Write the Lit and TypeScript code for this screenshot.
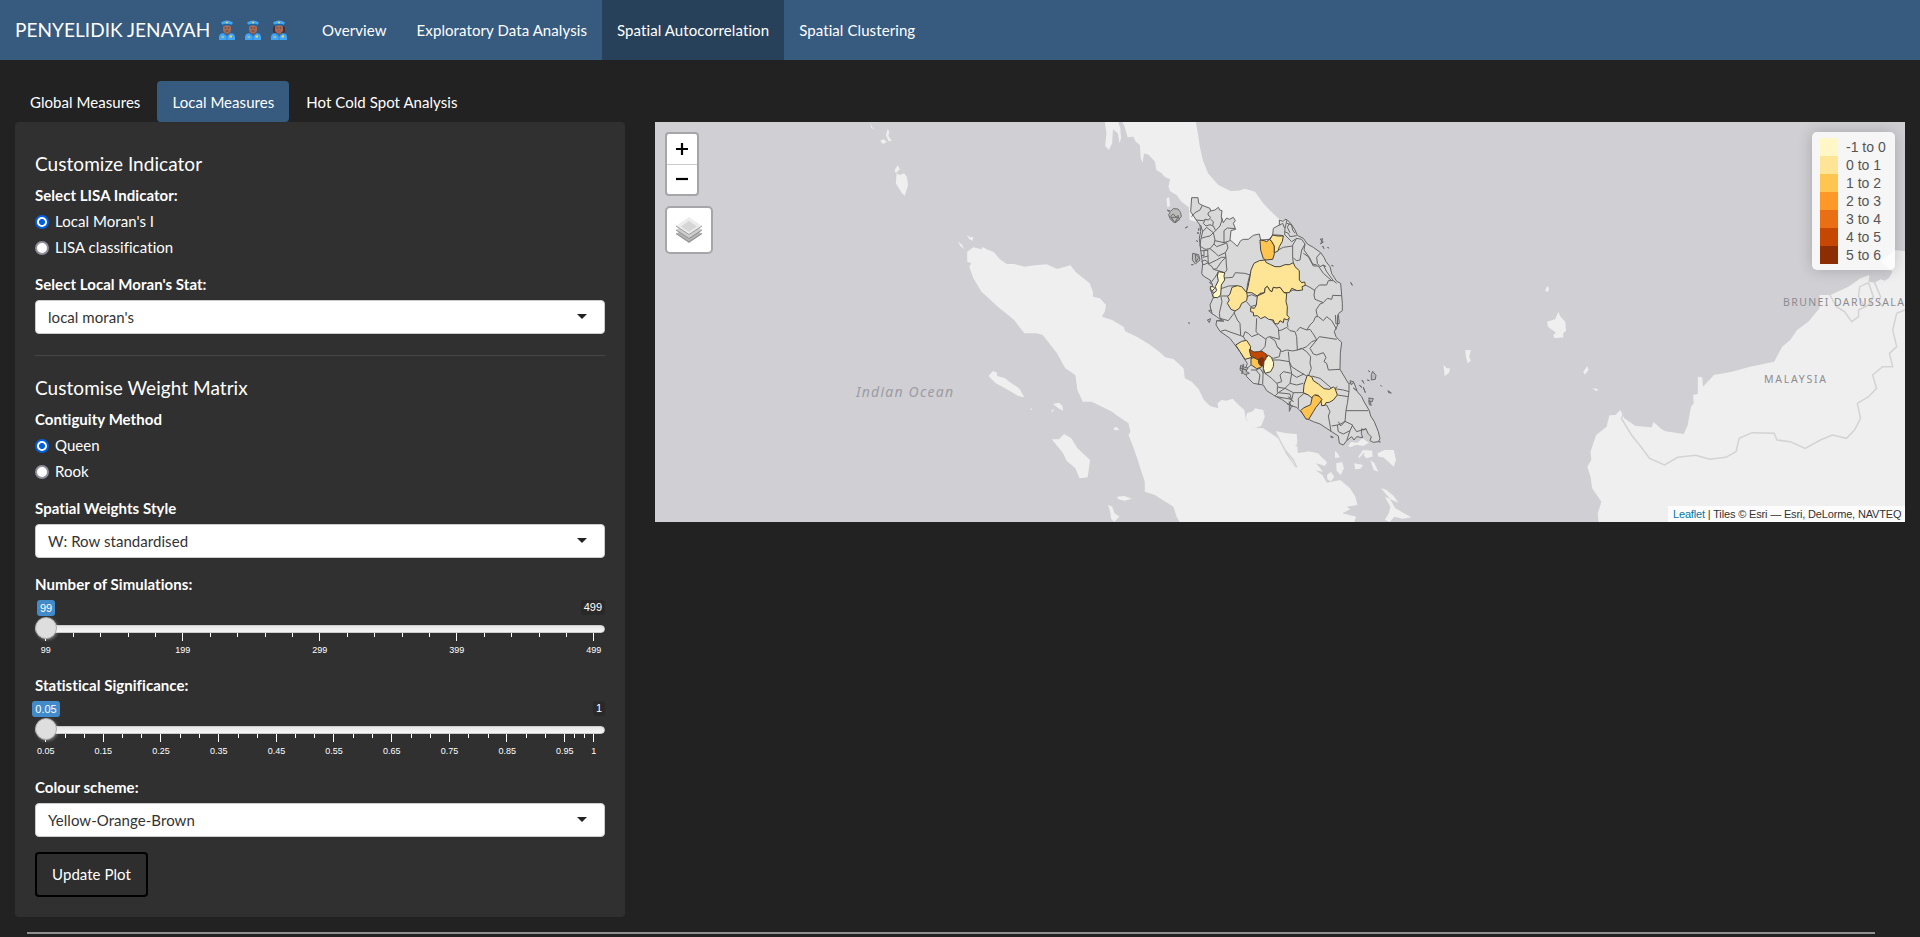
import { LitElement, html, svg, css } from "lit";
import { customElement, property } from "lit/decorators.js";

const OUTLINE = "125,83 144,83 146,100 157,106 180,115 182,123 195,120 205,112 209,120 216,122 214,140 220,158 230,144 238,148 250,142 256,152 250,160 257,178 243,182 240,210 250,218 262,229 272,212 280,208 295,208 310,196 328,192 332,210 358,208 368,195 370,175 388,165 388,150 400,154 405,148 411,149 422,160 435,180 442,196 460,205 472,222 490,232 512,248 522,262 528,275 540,290 545,310 560,334 572,340 575,376 577,400 577,422 566,430 562,440 563,465 553,485 558,500 565,508 575,517 571,550 570,598 582,618 595,640 612,638 622,665 635,680 642,695 658,722 662,738 673,755 685,785 690,806 685,815 670,817 660,812 664,800 655,792 648,776 641,780 635,776 634,790 638,803 620,800 612,810 605,800 590,812 580,825 568,820 565,798 545,785 525,772 510,762 490,755 475,748 450,722 440,712 420,706 395,688 375,678 350,662 340,645 310,640 290,620 285,600 292,580 285,570 270,545 255,525 240,505 210,484 198,465 200,452 215,452 200,440 185,430 180,405 190,382 182,360 188,345 180,330 160,318 155,310 158,282 152,240 148,205 152,185 150,165 140,152 122,125";

const BORDERS = [
  "125,140 135,128 150,120 157,106", "138,150 160,152 166,148 176,150 182,142 174,135 175,128 182,123",
  "166,148 160,160 168,168 180,164 188,168 190,155 182,148", "152,165 158,185 170,172 190,188 197,182 190,168",
  "197,182 210,168 216,150 214,140", "158,185 153,205 170,200 180,198 190,188", "190,188 195,210 192,222 180,236 165,238 150,228 153,205",
  "195,212 222,218 222,182 232,174 255,176", "192,222 200,230 222,222 230,218 234,234 226,248 205,258 195,248 180,236",
  "222,218 240,212", "173,240 175,282 200,270 214,262 228,262 226,248", "152,242 162,242 175,240", "156,256 162,258 162,242", "158,262 175,258",
  "154,275 165,270 175,278 162,284 158,282", "175,282 186,290 190,298 200,296 215,274 228,262", "190,298 205,302 224,308", "228,262 229,285 231,300 224,308",
  "224,324 248,322 256,308 284,310 298,314", "180,330 185,335 195,322 205,306", "213,356 236,348 262,347", "290,368 292,345 300,312",
  "190,384 213,378 236,378", "213,380 216,395 208,430 210,445 235,452 252,430 255,423", "210,445 222,454 200,452",
  "252,427 262,450 270,460 272,497 240,486 225,480 212,484", "320,445 318,485 325,492", "272,497 280,500 285,485 295,490 305,500 325,492",
  "280,500 287,512", "325,492 348,508 352,502 360,500 388,508", "348,508 345,530 330,545", "388,508 385,475 365,450",
  "360,502 375,512 382,530 392,540 388,560 370,565 352,556", "386,482 395,480 410,472 420,482 435,485 440,500 442,540 428,543 410,540 395,545 382,530",
  "440,484 450,472 470,480 480,478 487,488 492,495 500,510 485,515 470,530 458,535 442,540", "418,445 412,460 414,472",
  "470,480 480,465 490,455 497,440 505,440", "412,368 430,360 445,362", "465,345 480,352 495,362", "492,375 495,358 508,345 530,345 535,332 550,332 560,340",
  "492,375 495,388 520,398 532,385 545,388 548,376 575,377", "502,438 498,420 510,402 520,398", "505,440 520,452 530,440 545,452 560,478", "500,510 508,500 560,508",
  "500,510 480,535 490,552 500,555 520,548 528,562 522,575 530,580 535,600 570,598", "442,540 455,535 470,545 482,560 480,580 484,595 475,618",
  "415,545 418,575 388,570 368,570", "418,575 425,590 440,600 470,618", "418,575 425,610 400,605 390,615 395,635 380,640 365,625 345,610",
  "425,610 420,640 405,655 385,652 380,640", "425,612 440,622 462,612", "420,640 440,645 460,640", "405,655 430,668 460,668", "405,655 385,668 375,678",
  "382,650 382,668", "303,600 318,600 330,615 325,645", "303,585 285,600", "340,590 338,642", "318,600 330,595 340,610", "385,668 420,672 424,688 380,680",
  "430,668 425,690 415,705", "485,678 462,670 445,685 445,715", "485,618 510,625 545,655 580,660 597,665 597,640", "562,650 555,655", "562,675 595,680",
  "597,665 592,700 588,722 655,722", "588,722 585,755 572,768 565,755", "515,707 530,705 540,725 535,738 540,765 543,785", "545,768 562,765 572,762 585,754 608,765 600,782 580,792 565,785 562,765",
  "600,782 590,812", "608,768 620,785 648,776", "366,195 385,195 400,197", "404,195 405,175 411,150", "388,166 398,160 404,175", "404,185 415,190 420,200 440,197",
  "411,160 425,165 428,180 435,190", "418,160 412,172 420,188", "440,205 425,215 405,195", "440,205 428,225 428,265 430,278", "385,240 400,232 428,228",
  "440,205 455,208 465,222 455,240 450,270 440,272 430,264", "465,222 462,240 478,262 488,282 500,285", "460,250 475,260 490,288 505,288 520,310 545,332",
  "512,248 500,262 502,280 510,290 520,285 528,290", "520,285 530,305 550,332", "290,380 305,374 320,380", "290,395 302,410 318,405", "556,435 558,462 568,460 565,435",
];

const DISTRICTS = [
  { c: "#fec44f", p: "330,210 342,212 350,215 358,208 366,216 373,228 373,252 368,268 348,270 340,266 332,240" },
  { c: "#fee596", p: "368,195 382,198 400,198 397,214 388,230 384,243 373,248 373,228 366,216 360,208" },
  { c: "#fee596", p: "328,272 345,270 348,277 362,284 375,290 390,290 405,284 418,284 430,278 435,290 448,302 448,330 455,338 464,336 466,346 456,350 458,360 442,362 425,355 418,368 402,368 390,352 380,354 370,352 366,365 360,362 352,349 345,355 344,368 330,370 322,378 305,368 289,368 294,350 300,320 303,300 312,280" },
  { c: "#fee596", p: "322,378 344,368 345,355 352,349 360,362 366,365 370,352 380,354 390,352 402,368 410,370 408,395 412,410 411,435 418,443 412,450 402,446 400,458 390,452 384,462 374,461 370,450 356,448 345,440 332,446 322,437 311,438 310,427 302,425 302,413 313,415 319,405" },
  { c: "#fee596", p: "246,352 262,347 275,350 290,368 292,378 290,392 275,400 268,415 255,423 243,418 232,400 238,390 233,380 240,372" },
  { c: "#fff7c5", p: "205,305 224,308 222,318 224,330 214,345 212,375 203,383 190,382 188,372 200,362 196,350 205,332 202,318" },
  { c: "#fff7c5", p: "181,350 190,350 194,355 187,362 181,358" },
  { c: "#fee596", p: "257,525 275,514 290,511 302,530 300,545 306,562 285,568 270,545" },
  { c: "#c54702", p: "298,538 312,546 325,545 335,543 352,555 346,565 349,573 330,567 325,572 310,562 302,558" },
  { c: "#fec44f", p: "303,565 312,563 325,570 328,582 338,588 330,593 320,596 303,584" },
  { c: "#8c2d04", p: "327,566 338,562 341,570 339,587 330,586 325,576" },
  { c: "#fff7c5", p: "350,562 356,556 364,562 371,578 370,590 362,605 345,610 340,595 342,575" },
  { c: "#fee596", p: "472,615 485,620 490,632 505,642 522,656 538,658 550,651 555,655 562,675 550,690 538,697 528,698 524,706 515,707 513,692 505,676 495,675 486,684 475,675 460,668 462,645" },
  { c: "#fec44f", p: "487,680 494,675 506,678 516,688 508,700 498,712 490,725 476,748 468,747 452,722 460,714 482,704" },
];

const ISLETS = [
  "52,120 62,124 70,116 84,117 92,128 94,140 86,148 78,158 70,156 60,146 56,134 60,128", "62,138 70,132 78,142 84,136 88,150 76,154 66,148", "64,142 84,142 74,158", "106,174 113,170",
  "146,175 146,182", "144,186 144,192", "139,212 144,215", "128,250 146,254 150,270 136,282 127,270", "136,252 138,276 146,262", "124,284 130,284", "178,336 186,344", "184,352 182,362 190,370",
  "176,422 186,430 184,420", "172,450 182,446 178,458", "116,457 118,461", "272,586 284,592 294,594 288,604 298,610 284,614 276,604 270,600", "280,582 276,612", "270,594 290,600",
  "510,208 520,216 512,222 518,206", "518,228 522,236", "533,231 536,235", "520,285 524,290", "545,286 550,288", "602,337 607,346", "655,602 660,606", "668,604 678,616 676,628 664,630 664,614", "652,630 658,632",
  "636,630 642,640", "628,646 636,652", "600,632 612,636 604,645", "610,654 620,662", "640,652 646,668", "692,646 695,649", "714,662 724,669 716,668", "656,684 670,686 666,696 656,692 658,704 664,706", "686,815 691,816",
  "542,798 550,802 544,803", "418,695 424,710 418,724", "412,702 428,708", "415,680 430,695",
];

const RAW_WEST = [
  "1145,6 1150,18 1158,52 1172,50 1178,65 1188,75 1190,115 1195,128 1198,100 1210,105 1225,125 1228,150 1240,158 1250,172 1262,178 1258,200 1262,214 1278,225 1290,245 1308,262 1310,300 1400,330 1400,400 1532,390 1545,330 1540,300 1528,296 1510,275 1490,250 1470,215 1445,206 1430,212 1410,213 1380,195 1355,160 1342,120 1335,80 1330,40 1325,6",
  "1102,6 1135,6 1140,25 1142,55 1138,70 1134,40 1122,28 1120,70 1112,90 1103,78 1106,40",
  "765,395 780,382 800,388 803,381 812,388 830,396 845,418 862,432 880,432 905,440 930,436 960,433 985,447 1018,436 1030,455 1045,470 1065,490 1073,515 1073,530 1090,535 1105,555 1102,575 1095,590 1120,600 1148,620 1152,634 1180,650 1210,672 1240,700 1250,712 1270,717 1295,745 1298,775 1315,785 1332,808 1345,840 1360,858 1380,865 1378,850 1388,840 1400,842 1415,836 1430,855 1444,870 1448,900 1465,922 1490,925 1515,945 1535,962 1545,1000 1568,1040 1615,1048 1635,1065 1646,1088 1679,1080 1703,1105 1716,1130 1721,1155 1695,1160 1703,1168 1684,1180 1718,1190 1713,1206 1285,1206 1278,1190 1270,1160 1225,1125 1200,1115 1200,1085 1180,1010 1170,975 1160,945 1165,935 1160,910 1130,885 1120,875 1070,845 1048,845 1035,810 1030,765 1005,745 985,700 950,645 935,640 905,640 880,600 840,560 800,515 780,475 770,440 775,430 765,425",
  "1450,880 1465,874 1470,865 1490,870 1494,890 1485,918 1468,924 1455,915 1448,895",
  "1253,235 1260,232 1262,258 1255,262", "592,160 600,165 610,160 617,170 620,195 612,227 605,220 590,190", "587,150 595,136 600,148 590,160",
  "527,8 532,22 538,28 530,24", "570,26 574,35 572,48 580,62 572,64 566,45", "552,62 560,58 568,66 558,72",
  "742,364 752,374 758,388 748,378", "764,345 772,352 780,350 778,362 770,358",
  "817,768 828,753 838,758 838,768 858,775 868,785 892,805 905,832 890,828 860,806 835,790", "920,864 925,868 921,871", "975,852 990,848 998,858 1000,872 990,866", "970,872 978,868 974,876",
  "972,958 990,958 1002,942 1020,955 1035,985 1066,1020 1060,1072 1040,1075 1030,1045 1008,1022 1000,1000",
  "1124,925 1130,920 1138,930 1126,931", "1132,1130 1150,1128 1168,1136 1150,1142 1135,1138", "1110,1154 1120,1160 1126,1180 1138,1190 1125,1205 1118,1198 1115,1175",
];

const RAW_EAST = [
  "795,886 810,885 822,870 832,895 860,918 900,922 905,906 925,928 935,934 980,942 990,915 998,860 1005,850 1003,825 1015,822 1015,770 1026,772 1028,800 1055,765 1100,755 1145,740 1205,725 1225,680 1245,660 1262,630 1290,605 1318,565 1318,525 1345,525 1390,500 1420,475 1442,465 1440,485 1455,488 1470,478 1480,482 1490,475 1500,455 1470,425 1506,390 1531,394 1531,1206 768,1206 766,1180 775,1145 752,1105 748,1070 740,1040 750,1020 748,995 762,945 788,920",
  "668,575 672,588 685,605 687,632 680,640 680,652 658,655 655,645 662,638 642,620 640,605 660,598", "640,498 645,505 642,515 635,513", "436,690 450,690 446,710 450,722 442,730 438,712",
  "382,734 390,745 398,745 396,758 385,768", "740,738 743,750 734,764 730,755", "752,804 768,808 762,814",
  "145,978 152,966 168,968 180,955 196,968 182,978 165,974 150,982",
  "0,942 15,945 18,975 20,1010 45,994 70,1000 92,1030 88,1036 65,1030 82,1055 50,1048 15,1040 0,1010", "92,1065 102,1056 110,1070 102,1084 93,1078", "115,1030 130,1026 134,1045 126,1065 116,1052",
  "112,992 118,1000 124,1012 112,1014", "170,1010 182,990 205,992 205,1010 190,1015 182,1004 172,1016", "218,1000 235,990 258,990 264,1020 258,1040 245,1025 232,1012 220,1010",
  "200,1020 210,1030 220,1055 208,1050", "160,1030 182,1035 175,1046 162,1048", "226,1104 240,1110 258,1128 270,1148 250,1138", "236,1130 248,1136 262,1165 296,1188 302,1192 280,1196 260,1190 248,1206 236,1200 246,1180 250,1160",
];

const SEAMS = [
  "832,875 825,895 850,945 872,978 895,1015 932,1035 965,1012 1010,1006 1045,1018 1085,1012 1110,995 1118,955 1150,938 1205,940 1212,960 1245,965 1282,985 1320,960 1350,945 1385,955 1405,930 1420,895 1412,850 1440,830 1460,805 1450,765 1475,740 1500,740 1492,700 1510,680 1500,630 1510,580 1531,570",
  "1344,525 1360,560 1380,575 1398,605 1415,590 1415,570 1440,555 1452,530 1440,488", "1440,488 1418,500 1415,530 1430,560 1450,550", "1455,488 1470,530 1465,545 1475,560", "0,965 18,978", "20,1010 60,1020 90,1035", "170,1020 185,1000",
];

@customElement("lisa-map")
class LisaMap extends LitElement {
  static styles = css`
    :host { display: block; position: relative; height: 400px; overflow: hidden; background: #d0cfd4; font-family: "Liberation Sans", Arial, sans-serif; }
    svg.base { display: block; width: 1250px; height: 400px; }
    .land { fill: #efefef; }
    .seam { fill: none; stroke: #d3d3d5; stroke-width: 1.5px; vector-effect: non-scaling-stroke; }
    .pen { fill: #d9d9d9; }
    .pen, .border, .district { stroke: #666; stroke-width: 1px; vector-effect: non-scaling-stroke; stroke-linejoin: round; }
    .border { fill: none; }
    .district { stroke: #494336; }
    .isle { fill: #bbb; stroke: #6c6c6e; stroke-width: 1px; vector-effect: non-scaling-stroke; }
    .sea-label { font: italic 14px "Noto Sans", sans-serif; fill: #9c9ca2; }
    .label { font: 10.5px "Noto Sans", sans-serif; fill: #8c8c90; }
    .controls { position: absolute; left: 10px; top: 10px; display: flex; flex-direction: column; align-items: flex-start; gap: 10px; }
    .zoom { border: 2px solid #a6a6aa; border-radius: 4px; background: #fff; width: 30px; color: #000; }
    .zoom div { height: 29.5px; display: grid; place-items: center; }
    .zoom div + div { border-top: 1px solid #ccc; }
    .zoom svg { display: block; }
    .layers { width: 44px; height: 44px; border: 2px solid #a6a6aa; border-radius: 5px; background: #fff; display: grid; place-items: center; }
    .legend { position: absolute; right: 10px; top: 10px; width: 83px; height: 138px; box-sizing: border-box; padding: 6px 8px; background: rgba(255,255,255,.8); border-radius: 5px; box-shadow: 0 0 15px rgba(0,0,0,.2); font-size: 14px; line-height: 18px; color: #555; }
    .row { display: flex; gap: 8px; white-space: nowrap; }
    .swatch { width: 18px; height: 18px; }
    .credit { position: absolute; right: 0; bottom: 0; height: 16px; width: 237px; box-sizing: border-box; padding: 0 0 0 5px; line-height: 16px; font-size: 11px; letter-spacing: -.16px; color: #333; background: rgba(255,255,255,.8); white-space: nowrap; }
    .credit span { color: #0078a8; }
  `;
  legend: [string, string][] = [["#fff7c5", "-1 to 0"], ["#fee596", "0 to 1"], ["#fec551", "1 to 2"], ["#fe9829", "2 to 3"], ["#ea6e13", "3 to 4"], ["#c54702", "4 to 5"], ["#8c2d04", "5 to 6"]];
  render() {
    return html`
      <svg class="base" viewBox="655 122 1250 400">
        <g transform="translate(655 120) scale(.40816 .33333)">${RAW_WEST.map((p) => svg`<polygon class="land" points=${p}/>`)}</g>
        <g transform="translate(1290 120) scale(.40179 .33333)">
          ${RAW_EAST.map((p) => svg`<polygon class="land" points=${p}/>`)}
          ${SEAMS.map((p) => svg`<polyline class="seam" points=${p}/>`)}
        </g>
        <g transform="translate(1150 170) scale(.33333)">
          <polygon class="land" points="375,783 410,790 440,792 442,815 435,830 440,850 470,845 500,850 530,875 525,888 490,875 500,895 440,895 405,840"/>
          <polyline class="seam" points="375,783 405,840 430,870 440,892"/>
          <polygon class="pen" points=${OUTLINE}/>
          ${BORDERS.map((p) => svg`<polyline class="border" points=${p}/>`)}
          ${ISLETS.map((p) => svg`<polygon class="isle" points=${p}/>`)}
          ${DISTRICTS.map((d) => svg`<polygon class="district" fill=${d.c} points=${d.p}/>`)}
        </g>
        <text class="sea-label" x="856" y="397" textLength="97">Indian Ocean</text>
        <text class="label" x="1783" y="306" textLength="121">BRUNEI DARUSSALA</text>
        <text class="label" x="1764" y="383" textLength="62">MALAYSIA</text>
      </svg>
      <div class="controls">
        <div class="zoom">
          <div><svg width="14" height="14"><path d="M7 1V13M1 7H13" stroke="#000" stroke-width="2.2"/></svg></div>
          <div><svg width="14" height="14"><path d="M1 7H13" stroke="#000" stroke-width="2.2"/></svg></div>
        </div>
        <div class="layers"><svg width="26" height="26" viewBox="0 0 26 26">
          <path d="M0 17L13 8 26 17 13 26Z" fill="#b3b3b3"/><path d="M0 16.5L13 25 26 16.5" fill="none" stroke="#8e8e8e"/>
          <path d="M0 13L13 4 26 13 13 22Z" fill="#cdcdcd"/><path d="M0 13L13 21.5 26 13" fill="none" stroke="#8e8e8e"/>
          <path d="M0 9L13 0 26 9 13 18Z" fill="#ececec"/><path d="M5 9.5L13 4 21 9.5 13 15Z" fill="#d6d6d6"/><path d="M0 9L13 17.5 26 9" fill="none" stroke="#999"/>
        </svg></div>
      </div>
      <div class="legend">${this.legend.map(([c, t]) => html`<div class="row"><span class="swatch" style="background:${c}"></span><span>${t}</span></div>`)}</div>
      <div class="credit"><span>Leaflet</span> | Tiles © Esri — Esri, DeLorme, NAVTEQ</div>`;
  }
}

@customElement("range-slider")
class RangeSlider extends LitElement {
  @property() value = "";
  @property() max = "";
  @property({ attribute: false }) majors: [number, string][] = [];
  @property({ attribute: false }) minors: number[] = [];
  static styles = css`
    :host { display: block; position: relative; height: 58px; font-family: "Liberation Sans", Arial, sans-serif; color: #fff; }
    .values { display: flex; justify-content: space-between; align-items: flex-start; height: 25px; font-size: 11px; }
    .now { width: 22px; display: flex; justify-content: center; }
    .now span { background: #428bca; border-radius: 3px; padding: 0 3px; line-height: 16px; }
    .max { background: #292929; border-radius: 3px; padding: 0 3px; line-height: 15px; }
    .line { height: 8px; box-sizing: border-box; border: 1px solid #ccc; border-radius: 8px; background: linear-gradient(#dedede -50%, #fff 150%); }
    .knob { position: absolute; left: 0; top: 17px; width: 22px; height: 22px; box-sizing: border-box; border: 1px solid #ababab; border-radius: 50%; background: #dedede; box-shadow: 1px 1px 3px rgba(255,255,255,.3); }
    svg { display: block; width: 570px; height: 25px; shape-rendering: crispEdges; }
    rect { fill: #fff; }
    text { fill: #fff; font-size: 9px; text-anchor: middle; }
  `;
  render() {
    return html`
      <div class="values"><div class="now"><span>${this.value}</span></div><span class="max">${this.max}</span></div>
      <div class="line"></div>
      <svg viewBox="0 0 570 25">
        ${this.minors.map((m) => svg`<rect x=${Math.round(10.3 + m * 548)} y="0" width="1" height="4"/>`)}
        ${this.majors.map(([m, t]) => svg`<rect x=${Math.round(10 + m * 548)} y="0" width="1" height="8"/><text x=${10.7 + m * 548} y="20">${t}</text>`)}
      </svg>
      <div class="knob"></div>`;
  }
}

@customElement("app-root")
class AppRoot extends LitElement {
  static styles = css`
    :host { display: block; height: 937px; overflow: hidden; background: #222; color: #fff; font: 15px/21px Lato, sans-serif; letter-spacing: .05px; }
    range-slider, lisa-map { letter-spacing: 0; }
    nav { display: flex; height: 60px; background: #375a7f; letter-spacing: .09px; }
    .brand { display: flex; align-items: center; width: 292px; padding: 0 0 2px 15px; box-sizing: border-box; font-size: 19px; white-space: pre; letter-spacing: .05px; }
    .cops { display: flex; gap: 10px; margin-left: 9px; margin-top: 2px; }
    nav a { padding: 20px 15px 19px; }
    nav a:nth-of-type(1) { margin-left: 15px; }
    nav a.on { background: #28415b; }
    .tabs { display: flex; gap: 2px; padding: 21px 15px 0; }
    .tabs a { padding: 11px 15px 9px; border-radius: 4px; }
    .tabs .on { background: #375a7f; }
    .cols { display: grid; grid-template-columns: 610px 1250px; gap: 30px; padding: 0 15px; align-items: start; }
    .well { background: #303030; border-radius: 4px; height: 795px; padding: 31px 20px 0; box-sizing: border-box; }
    h4 { margin: 0; font-size: 19px; font-weight: 400; line-height: 21px; }
    .lbl { font-weight: 700; height: 21px; }
    .radio { display: flex; align-items: center; gap: 6px; height: 21px; }
    .dot { width: 14px; height: 14px; border-radius: 50%; box-sizing: border-box; border: 2px solid #8f8f9d; background: #fff; }
    .dot.on { border-color: #0060df; background: radial-gradient(circle, #0060df 2.7px, #fff 3.3px); }
    .select { height: 34px; box-sizing: border-box; border: 1px solid #ccc; border-radius: 4px; background: #fff; color: #333; display: flex; align-items: center; justify-content: space-between; padding: 1px 17px 0 12px; margin-top: 5px; }
    .select i { border: 5px solid transparent; border-top-color: #222; border-bottom: 0; margin-top: -2px; }
    .rule { height: 1px; background: #464646; margin: 21px 0; }
    .a { margin-top: 11px; } .b { margin-top: 5px; } .c { margin-top: 5px; } .d { margin-top: 16px; } .e { margin-top: 5px; }
    .f { margin-top: 11px; } .g { margin-top: 16px; } .h { margin-top: 17px; } .i { margin-top: 18px; }
    .btn { display: grid; place-items: center; margin-top: 15px; width: 113px; height: 45px; box-sizing: border-box; border: 2px solid #000; border-radius: 4px; background: #2e2e2e; }
    .foot { height: 2px; margin: 15px 45px 0 27px; background: #909090; }
  `;
  cop(woman: boolean) {
    return html`<svg width="16" height="20" viewBox="0 0 16 20">
      ${woman ? svg`<path d="M3 6Q.8 10 2.8 13H13.2Q15.2 10 13 6Z" fill="#4a2f35"/>` : ""}
      <path d="M0 20V17Q0 13.5 4.5 13.2L8 15 11.5 13.2Q16 13.5 16 17V20Z" fill="#42a5f5"/>
      <path d="M6 11H10V14L8 15.5 6 14Z" fill="#855a49"/><rect x="4" y="4.5" width="8" height="8.5" rx="3.5" fill="#a56c56"/>
      <path d="M5.8 8H7.2M8.8 8H10.2" stroke="#493239" stroke-width=".9"/><path d="M6.5 11H9.5" stroke=${woman ? "#c13f58" : "#664039"}/>
      <path d="M2 2.5Q8-1.5 14 2.5L12.5 5H3.5Z" fill="#42a5f5"/><path d="M3.4 4.5Q8 2.8 12.6 4.5V6Q8 4.7 3.4 6Z" fill="#1765ac"/>
      <circle cx="8" cy="2.6" r="1" fill="#fdd835"/><path d="M5 13.5L8 16 11 13.5" fill="none" stroke="#1976d2"/>
      <rect x="10.5" y="15.5" width="2.5" height="2" fill="#fdd835"/><path d="M2.5 17H5" stroke="#fdd835"/><path d="M8 15.5V20" stroke="#1976d2" stroke-width=".7"/></svg>`;
  }
  select(t: string) { return html`<div class="select"><span>${t}</span><i></i></div>`; }
  render() {
    const minor1 = Array.from({ length: 20 }, (_, i) => i / 20).filter((_, i) => i % 5);
    const step = 0.1 / 0.95;
    const major2 = Array.from({ length: 10 }, (_, i) => [i * step, (0.05 + i * 0.1).toFixed(2)] as [number, string]);
    const minor2 = [...Array.from({ length: 9 }, (_, i) => [(i + 1 / 3) * step, (i + 2 / 3) * step]).flat(), 9.167 * step, 9.333 * step];
    return html`
      <nav>
        <div class="brand">PENYELIDIK JENAYAH<span class="cops">${this.cop(false)}${this.cop(false)}${this.cop(true)}</span></div>
        <a>Overview</a><a>Exploratory Data Analysis</a><a class="on">Spatial Autocorrelation</a><a>Spatial Clustering</a>
      </nav>
      <div class="tabs"><a>Global Measures</a><a class="on">Local Measures</a><a>Hot Cold Spot Analysis</a></div>
      <div class="cols">
        <div class="well">
          <h4>Customize Indicator</h4>
          <div class="lbl a">Select LISA Indicator:</div>
          <div class="radio b"><span class="dot on"></span>Local Moran's I</div>
          <div class="radio c"><span class="dot"></span>LISA classification</div>
          <div class="lbl d">Select Local Moran's Stat:</div>
          ${this.select("local moran's")}
          <div class="rule"></div>
          <h4>Customise Weight Matrix</h4>
          <div class="lbl f">Contiguity Method</div>
          <div class="radio b"><span class="dot on"></span>Queen</div>
          <div class="radio c"><span class="dot"></span>Rook</div>
          <div class="lbl d">Spatial Weights Style</div>
          ${this.select("W: Row standardised")}
          <div class="lbl g">Number of Simulations:</div>
          <range-slider class="e" value="99" max="499" .majors=${[[0, "99"], [0.25, "199"], [0.5, "299"], [0.75, "399"], [1, "499"]]} .minors=${minor1}></range-slider>
          <div class="lbl h">Statistical Significance:</div>
          <range-slider class="e" value="0.05" max="1" .majors=${[...major2, [1, "1"]]} .minors=${minor2}></range-slider>
          <div class="lbl i">Colour scheme:</div>
          ${this.select("Yellow-Orange-Brown")}
          <div class="btn">Update Plot</div>
        </div>
        <lisa-map></lisa-map>
      </div>
      <div class="foot"></div>`;
  }
}
